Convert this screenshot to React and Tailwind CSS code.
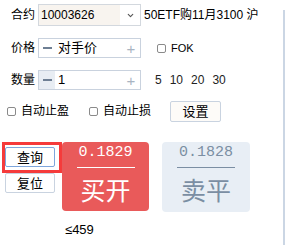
import { ChevronDown } from 'lucide-react'

const font = { fontFamily: '"Liberation Sans", "Noto Sans CJK SC", sans-serif' }

function Check({ label, className = '' }) {
  return (
    <label className={`flex items-center gap-[5px] ${className}`}>
      <span className="w-[9px] h-[9px] border border-[#8a8a8a] rounded-[2px] bg-white" />
      <span>{label}</span>
    </label>
  )
}

function Stepper({ value, shadeMinus }) {
  return (
    <div className="w-[103px] h-[20px] border border-[#c9d2de] bg-white flex items-center">
      <div className={`w-[16px] h-full flex items-center justify-center text-[#5b6b80] ${shadeMinus ? 'bg-[#e8edf3]' : ''}`}>
        <span className="block w-[9px] h-[2px] bg-[#6e7f94]" />
      </div>
      <span className="flex-1 pl-[3px] text-[13px] text-black">{value}</span>
      <span className="w-[18px] text-center text-[15px] leading-none text-[#a9b4c2]">+</span>
    </div>
  )
}

export default function App() {
  return (
    <div className="w-[287px] h-[245px] bg-white flex text-[12px] text-black overflow-hidden" style={font}>
      <div className="flex-1 flex flex-col">
        <div className="flex items-center h-[22px] mt-[4px]">
          <span className="w-[38px] pl-[11px] text-[12px]">合约</span>
          <div className="w-[103px] h-[22px] border border-[#d3d8de] bg-[#f8f4ef] flex items-center">
            <span className="flex-1 pl-[2px] text-[12px]" style={{ fontFamily: 'Tahoma, "Liberation Sans", sans-serif' }}>10003626</span>
            <span className="w-[20px] h-full bg-white flex items-center justify-center">
              <ChevronDown size={9} strokeWidth={3} className="text-[#555]" />
            </span>
          </div>
          <span className="ml-[3px] text-[12px]">50ETF购11月3100 沪</span>
        </div>

        <div className="flex items-center h-[20px] mt-[12px]">
          <span className="w-[38px] pl-[11px]">价格</span>
          <Stepper value="对手价" />
          <Check label="FOK" className="ml-[16px] text-[11px] gap-[3px]" />
        </div>

        <div className="flex items-center h-[20px] mt-[12px]">
          <span className="w-[38px] pl-[11px]">数量</span>
          <Stepper value="1" shadeMinus />
          <div className="flex gap-[8px] ml-[14px] text-[12px] text-[#222]">
            <span>5</span>
            <span>10</span>
            <span>20</span>
            <span>30</span>
          </div>
        </div>

        <div className="flex items-center h-[22px] mt-[10px]">
          <Check label="自动止盈" className="ml-[7px]" />
          <Check label="自动止损" className="ml-[20px]" />
          <button className="ml-[19px] w-[51px] h-[21px] border border-[#c9d3e0] rounded-[2px] bg-[#fdfbf8] text-[13px]">设置</button>
        </div>

        <div className="flex mt-[20px]">
          <div className="flex flex-col ml-[2px] w-[60px]">
            <div className="h-[31px] border-[3px] border-[#f53b3b] pt-[2px]">
              <button className="w-[50px] h-[20px] border border-[#7ea6dc] rounded-[2px] bg-white text-[13px] leading-none">查询</button>
            </div>
            <button className="ml-[3px] w-[50px] h-[20px] border border-[#c9d3e0] rounded-[2px] bg-white text-[13px] leading-none">复位</button>
          </div>
          <div className="flex flex-col items-center">
            <div className="w-[87px] h-[69px] rounded-[4px] bg-[#e95a5a] text-white flex flex-col items-center pt-[2px] overflow-hidden">
              <span className="text-[15px] leading-[18px]" style={{ fontFamily: '"Liberation Mono", monospace' }}>0.1829</span>
              <span className="w-[58px] h-px bg-white mt-[5px]" />
              <span className="mt-[3px] text-[25px] leading-[36px]" style={{ fontFamily: '"Noto Sans CJK SC", serif' }}>买开</span>
            </div>
            <span className="mt-[9px] text-[13px] self-start ml-[3px]">≤459</span>
          </div>
          <div className="ml-[13px] w-[88px] h-[70px] rounded-[4px] bg-[#e8eef5] text-[#7b8ea3] flex flex-col items-center pt-[2px] overflow-hidden">
            <span className="text-[15px] leading-[18px]" style={{ fontFamily: '"Liberation Mono", monospace' }}>0.1828</span>
            <span className="w-[58px] h-px bg-[#7b8ea3] mt-[5px]" />
            <span className="mt-[3px] text-[25px] leading-[36px]" style={{ fontFamily: '"Noto Sans CJK SC", serif' }}>卖平</span>
          </div>
        </div>
      </div>
      <div className="w-[2px] mt-[10px] mr-[2px] bg-[#cbd6e4]" />
    </div>
  )
}
